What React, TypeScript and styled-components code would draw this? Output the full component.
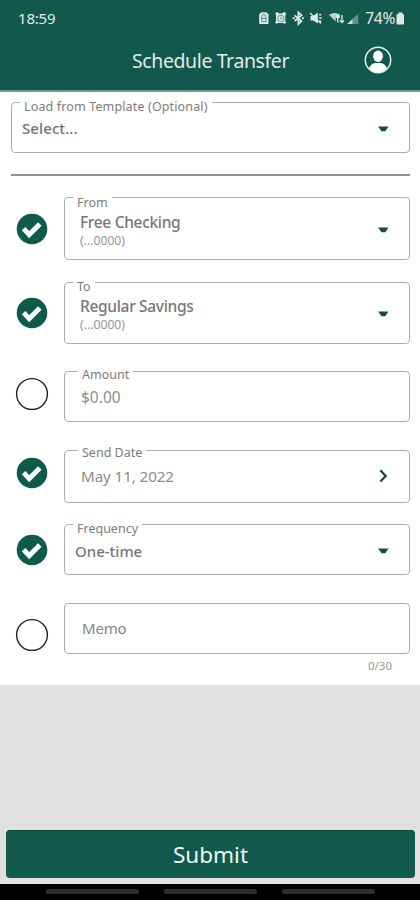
import React from "react";
import styled, { createGlobalStyle } from "styled-components";

const Global = createGlobalStyle`
  * { box-sizing: border-box; }
  body { margin: 0; background: #fff; font-family: "Noto Sans", "Open Sans", sans-serif; }
`;

const Screen = styled.div`
  width: 420px;
  height: 900px;
  display: flex;
  flex-direction: column;
  background: #e1e1e1;
  overflow: hidden;
`;

const Header = styled.header`
  height: 92px;
  flex: none;
  background: #12584c;
  border-bottom: 2px solid #709f97;
  color: #e0ebe8;
`;

const StatusBar = styled.div`
  height: 36px;
  padding: 0 15px 0 18px;
  display: flex;
  align-items: center;
  justify-content: space-between;
`;

const StatusIcons = styled.div`
  display: flex;
  align-items: center;
  gap: 1px;
`;

const TitleBar = styled.div`
  height: 50px;
  display: grid;
  grid-template-columns: 132px 1fr 57px;
  align-items: center;
`;

const Text = styled.span<{ $size: number; $track?: number; $color?: string; $weight?: number; $line?: number }>`
  font-size: ${(p) => p.$size}px;
  letter-spacing: ${(p) => p.$track ?? 0}px;
  color: ${(p) => p.$color ?? "inherit"};
  font-weight: ${(p) => p.$weight ?? 400};
  line-height: ${(p) => p.$line ?? 20}px;
  white-space: nowrap;
`;

const Form = styled.main`
  height: 593px;
  flex: none;
  background: #fff;
  padding: 10px 10px 0 11px;
`;

const Divider = styled.hr`
  margin: 21px 0;
  border: 0;
  height: 2px;
  background: #929292;
`;

const Row = styled.div<{ $gap: number }>`
  display: grid;
  grid-template-columns: 53px 1fr;
  align-items: start;
  margin-top: ${(p) => p.$gap}px;
`;

const Marker = styled.div<{ $top: number }>`
  margin: ${(p) => p.$top}px 0 0 4px;
  width: 34px;
  height: 34px;
  svg { display: block; }
`;

const Box = styled.div<{ $height: number; $left: number; $top: number }>`
  position: relative;
  height: ${(p) => p.$height}px;
  border: 1px solid #adadad;
  border-radius: 4px;
  padding: ${(p) => p.$top}px 20px 0 ${(p) => p.$left}px;
  display: flex;
  justify-content: space-between;
  align-items: flex-start;
`;

const Stack = styled.div`
  display: flex;
  flex-direction: column;
`;

const FloatLabel = styled.span<{ $left: number; $top: number; $track?: number }>`
  position: absolute;
  left: ${(p) => p.$left}px;
  top: ${(p) => p.$top}px;
  padding: 0 4px;
  background: #fff;
  color: #7c7c7c;
  font-size: 12.5px;
  line-height: 14px;
  letter-spacing: ${(p) => p.$track ?? 0}px;
  white-space: nowrap;
`;

const Adornment = styled.span<{ $top: number }>`
  margin-top: ${(p) => p.$top}px;
  height: 14px;
  svg { display: block; }
`;

const Counter = styled.div`
  display: flex;
  justify-content: flex-end;
  padding: 4px 18px 0 0;
`;

const Spacer = styled.div`
  flex: 1;
`;

const Submit = styled.button`
  flex: none;
  height: 48px;
  margin: 0 5px 6px 6px;
  padding: 0;
  border: 0;
  border-top: 1px solid #08473b;
  border-radius: 4px;
  background: #115a4c;
  color: #eef6f4;
  font-family: inherit;
`;

const NavBar = styled.nav`
  flex: none;
  height: 16px;
  background: #000;
  display: flex;
  gap: 25px;
  padding: 5px 0 0 46px;
`;

const NavPill = styled.i`
  width: 93px;
  height: 5px;
  border-radius: 2px;
  background: #2d2d2d;
`;

const Caret = () => (
  <svg width="12" height="14" viewBox="0 0 12 14">
    <path d="M1.1 4.5h10.4L8.3 9.2H4.5z" fill="#124f42" />
  </svg>
);

const Chevron = () => (
  <svg width="12" height="14" viewBox="0 0 12 14">
    <path d="M3.4 1.2L8.7 7 3.4 12.5" fill="none" stroke="#164b40" strokeWidth="2.3" />
  </svg>
);

const Check = () => (
  <svg width="34" height="34" viewBox="0 0 34 34">
    <circle cx="17" cy="17" r="15.3" fill="#0e5a4c" />
    <path d="M8.6 16.6l5.6 6L24.8 12" fill="none" stroke="#fff" strokeWidth="4.9" />
  </svg>
);

const Empty = () => (
  <svg width="34" height="34" viewBox="0 0 34 34">
    <circle cx="17" cy="17" r="15.4" fill="none" stroke="#222" strokeWidth="1.4" />
  </svg>
);

const StatusGlyphs = () => (
  <svg width="107" height="16" viewBox="0 0 102 16" preserveAspectRatio="none" fill="#dbe9e6">
    <path d="M2 4.5L4 2.3h5l2 2.2v8.5a1 1 0 0 1-1 1H3a1 1 0 0 1-1-1z" />
    <path d="M4.5 8V6.5a2 2 0 0 1 4 0V8M4.3 8.5h4.4v3H4.3z" fill="none" stroke="#4d8377" strokeWidth=".9" />
    <path d="M17.5 3l2-1 1.5 1.5h3l1.5-1.5 2.5 1.5-1 2v6l1 1.5-2 .8-1.3-.8h-4.4l-1.6.8-1.6-1 1-1.500v-6z" />
    <circle cx="22.8" cy="8.5" r="3.2" fill="none" stroke="#4d8377" strokeWidth=".8" />
    <path d="M22.8 6.8v2h1.5" fill="none" stroke="#4d8377" strokeWidth=".8" />
    <path d="M35.8 5.3l6.7 5.700-3 3V2.500l3 2.800-6.700 5.700M34 8.200h2M42.800 8.200h2" fill="none" stroke="#dbe9e6" strokeWidth="1.7" />
    <path d="M51 6h2.5L58 2.500v11l-4.500-3H51zM59.200 4h2v1.500h-2zM59.200 7.300h2.500v1.500h-2.500zM59.200 10.500h2V12h-2z" />
    <path d="M50.5 3L61 13.500" stroke="#dbe9e6" strokeWidth="1.3" />
    <path d="M68.5 4.700q5.500-3.500 11 0L78 7h-3v4.500z" opacity=".85" />
    <path d="M77 12.500V5.500m-2 2l2-2 2 2M81 5v7.500m-2-2l2 2 2-2" fill="none" stroke="#dbe9e6" strokeWidth="1.3" />
    <path d="M86 14L96.500 3.500V14z" opacity=".4" />
    <path d="M86 14l5-5v5z" opacity=".9" />
  </svg>
);

const Battery = () => (
  <svg width="9" height="13" viewBox="0 0 9 13">
    <path d="M2.5.5h4v1.800h1.500v9.200a1 1 0 0 1-1 1H1.500a1 1 0 0 1-1-1V2.300h2z" fill="#dce9e6" />
  </svg>
);

const Profile = () => (
  <svg width="30" height="30" viewBox="0 0 30 30">
    <circle cx="15" cy="14" r="12.7" fill="none" stroke="#e4efec" strokeWidth="1.5" />
    <ellipse cx="15" cy="10.3" rx="4.9" ry="5.7" fill="#fff" />
    <path d="M6.2 22.500q.8-4.300 5.800-5.500h6q5 1.200 5.800 5.500-3.800 4-8.800 4t-8.800-4z" fill="#fff" />
  </svg>
);

interface Item {
  gap: number;
  height: number;
  left: number;
  top: number;
  done: boolean;
  markTop: number;
  label?: { text: string; left: number; top: number };
  value: string;
  size: number;
  track: number;
  color: string;
  weight: number;
  sub?: string;
  icon?: "caret" | "chevron";
  iconTop?: number;
}

const items: Item[] = [
  { gap: 0, height: 63, left: 15, top: 14, done: true, markTop: 15, label: { text: "From", left: 8, top: -2 }, value: "Free Checking", size: 15.5, track: -0.32, color: "#777", weight: 500, sub: "(...0000)", icon: "caret", iconTop: 11 },
  { gap: 22, height: 62, left: 15, top: 13, done: true, markTop: 14, label: { text: "To", left: 8, top: -3 }, value: "Regular Savings", size: 15.5, track: -0.32, color: "#777", weight: 500, sub: "(...0000)", icon: "caret", iconTop: 11 },
  { gap: 27, height: 51, left: 16, top: 15, done: false, markTop: 6, label: { text: "Amount", left: 13, top: -4 }, value: "$0.00", size: 15.5, track: 0, color: "#8c8c8c", weight: 400 },
  { gap: 28, height: 53, left: 16, top: 15, done: true, markTop: 6, label: { text: "Send Date", left: 13, top: -5 }, value: "May 11, 2022", size: 15.2, track: -0.1, color: "#8c8c8c", weight: 400, icon: "chevron", iconTop: 3 },
  { gap: 21, height: 51, left: 10, top: 16, done: true, markTop: 9, label: { text: "Frequency", left: 8, top: -3 }, value: "One-time", size: 15, track: 0, color: "#777", weight: 500, icon: "caret", iconTop: 3 },
  { gap: 28, height: 51, left: 17, top: 14, done: false, markTop: 15, value: "Memo", size: 15, track: -0.2, color: "#858585", weight: 400 },
];

export default function App() {
  return (
    <Screen>
      <Global />
      <Header>
        <StatusBar>
          <Text $size={15} $track={-0.2}>18:59</Text>
          <StatusIcons>
            <StatusGlyphs />
            <Text $size={15.5} $track={-0.3}>74%</Text>
            <Battery />
          </StatusIcons>
        </StatusBar>
        <TitleBar>
          <span />
          <Text $size={19.5} $weight={400} $track={-0.4} $line={28}>Schedule Transfer</Text>
          <Profile />
        </TitleBar>
      </Header>
      <Form>
        <Box $height={51} $left={10} $top={15}>
          <FloatLabel $left={8} $top={-3} $track={0.14}>Load from Template (Optional)</FloatLabel>
          <Text $size={15.2} $weight={500} $color="#747474">Select...</Text>
          <Adornment $top={4}><Caret /></Adornment>
        </Box>
        <Divider />
        {items.map((it) => (
          <Row key={it.value} $gap={it.gap}>
            <Marker $top={it.markTop}>{it.done ? <Check /> : <Empty />}</Marker>
            <Box $height={it.height} $left={it.left} $top={it.top}>
              {it.label && (
                <FloatLabel $left={it.label.left} $top={it.label.top}>{it.label.text}</FloatLabel>
              )}
              <Stack>
                <Text $size={it.size} $track={it.track} $color={it.color} $weight={it.weight}>{it.value}</Text>
                {it.sub && <Text $size={12.2} $line={18} $color="#949494">{it.sub}</Text>}
              </Stack>
              {it.icon && (
                <Adornment $top={it.iconTop ?? 0}>{it.icon === "caret" ? <Caret /> : <Chevron />}</Adornment>
              )}
            </Box>
          </Row>
        ))}
        <Counter><Text $size={11.5} $line={16} $color="#999">0/30</Text></Counter>
      </Form>
      <Spacer />
      <Submit><Text $size={22.5} $line={30}>Submit</Text></Submit>
      <NavBar><NavPill /><NavPill /><NavPill /></NavBar>
    </Screen>
  );
}
